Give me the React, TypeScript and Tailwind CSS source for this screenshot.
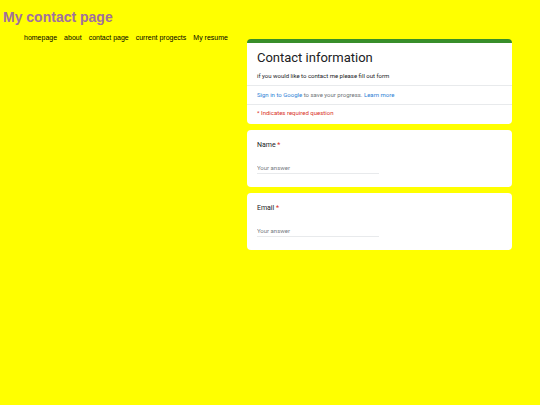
import React from "react";

const links = ["homepage", "about", "contact page", "current progects", "My resume"];

const questions = [
  { id: "name", label: "Name", type: "text" },
  { id: "email", label: "Email", type: "email" },
];

export default function App() {
  return (
    <main className="min-h-screen bg-[#ffff00] font-['Liberation_Sans',Arial,sans-serif]">
      <h1 className="pt-2 pl-[3px] text-[14px] leading-[18px] font-bold text-[#a0709e]">
        My contact page
      </h1>

      <div className="flex items-start">
        {/* Navigation */}
        <nav className="mt-[7px] ml-6 shrink-0">
          <ul className="flex gap-[7px] text-[7px] leading-[9px] text-black">
            {links.map((link) => (
              <li key={link}>
                <a href="#">{link}</a>
              </li>
            ))}
          </ul>
        </nav>

        {/* Contact form */}
        <form className="mt-[13px] mr-7 ml-[19px] flex flex-1 flex-col gap-[6px] font-[Roboto,sans-serif] text-[6px] leading-[8px] text-[#202124]">
          <section className="overflow-hidden rounded border-t-4 border-[#388e2a] bg-white">
            <div className="px-[10px] pt-[6px] pb-[5px]">
              <h2 className="text-[13px] leading-[18px]">Contact information</h2>
              <p className="mt-[5px]">if you would like to contact me please fill out form</p>
            </div>
            <p className="border-t border-[#e8eaec] px-[10px] py-[5px] text-[#6f7377]">
              <a href="#" className="text-[#2f7fd6]">
                Sign in to Google
              </a>{" "}
              to save your progress.{" "}
              <a href="#" className="text-[#2f7fd6]">
                Learn more
              </a>
            </p>
            <p className="border-t border-[#e8eaec] px-[10px] pt-[4px] pb-[7px] text-[#d93025]">
              * Indicates required question
            </p>
          </section>

          {questions.map((question) => (
            <section key={question.id} className="rounded bg-white px-[10px] pt-[10px] pb-[13px]">
              <label htmlFor={question.id} className="block text-[7px] leading-[10px]">
                {question.label} <span className="text-[#d93025]">*</span>
              </label>
              <input
                id={question.id}
                type={question.type}
                required
                placeholder="Your answer"
                className="mt-[12px] block h-[12px] w-1/2 border-b border-[#e8eaec] outline-none placeholder:text-[#777b7f]"
              />
            </section>
          ))}
        </form>
      </div>
    </main>
  );
}
